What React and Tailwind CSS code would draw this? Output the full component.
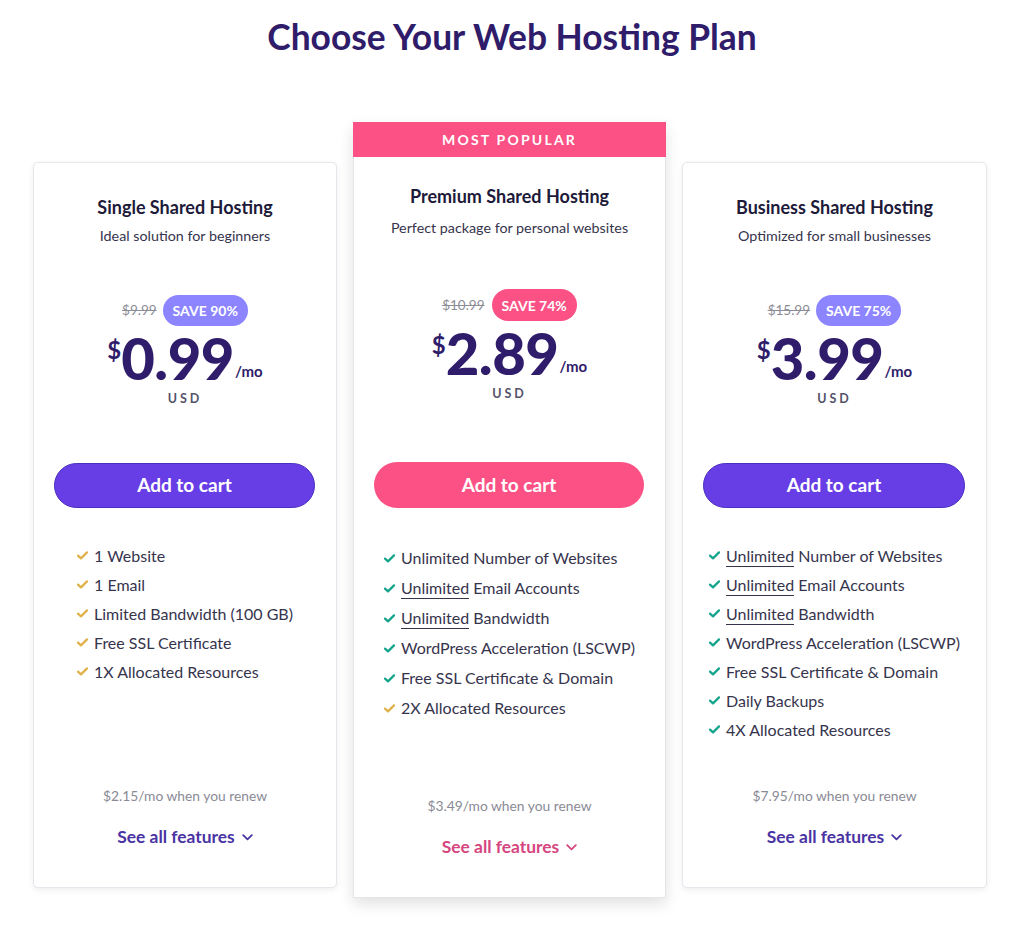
import React from "react";

const font = { fontFamily: "Lato, 'Open Sans', Arial, sans-serif" };

function Check({ gold }) {
  return (
    <svg width="11" height="9" viewBox="0 0 11 9" className="shrink-0">
      <path
        d="M1 4.6 L4 7.4 L10 1.4"
        fill="none"
        stroke={gold ? "#e0b04a" : "#14a38b"}
        strokeWidth="2.2"
        strokeLinecap="round"
        strokeLinejoin="round"
      />
    </svg>
  );
}

function Chevron({ color }) {
  return (
    <svg width="11" height="7" viewBox="0 0 11 7" className="ml-[7px] mt-[1px]">
      <path d="M1.2 1.2 L5.5 5.3 L9.8 1.2" fill="none" stroke={color} strokeWidth="1.8" strokeLinecap="round" strokeLinejoin="round" />
    </svg>
  );
}

function Feature({ f }) {
  return (
    <li className="flex items-center gap-[6px] h-[29px] text-[16px] text-[#36344d]">
      <Check gold={f.gold} />
      <span>
        {f.u ? (
          <>
            <span className="border-b border-[#36344d] pb-[1px]">Unlimited</span>
            {" " + f.t}
          </>
        ) : (
          f.t
        )}
      </span>
    </li>
  );
}

function Card({ plan }) {
  const pink = plan.popular;
  return (
    <div
      className={
        pink
          ? "w-[313px] bg-white border border-[#e4e4ea] shadow-[0_6px_14px_rgba(0,0,0,0.12)] flex flex-col h-[776px]"
          : "w-[305px] mt-[40px] bg-white border border-[#e6e6ec] rounded-[5px] shadow-[0_2px_6px_rgba(0,0,0,0.07)] flex flex-col h-[726px]"
      }
    >
      {pink && (
        <div className="h-[35px] -mx-px -mt-px bg-[#fc5185] text-white text-[14px] font-bold tracking-[2.2px] flex items-center justify-center">
          MOST POPULAR
        </div>
      )}
      <div className={pink ? "pt-[27px] flex flex-col items-center" : "pt-[32px] flex flex-col items-center"}>
        <div className="text-[18px] font-bold text-[#1d1a3a] leading-[24px]">{plan.name}</div>
        <div className={pink ? "text-[14.3px] text-[#36344d] leading-[20px] mt-[10px]" : "text-[14.3px] text-[#36344d] leading-[20px] mt-[7px]"}>
          {plan.sub}
        </div>
        <div className={pink ? "flex items-center gap-[7px] mt-[51px]" : "flex items-center gap-[6px] mt-[49px]"}>
          <span className="text-[13.5px] text-[#8d8d97] line-through">{plan.old}</span>
          <span
            className={
              pink
                ? "h-[32px] px-[10px] rounded-full bg-[#fc5185] text-white text-[14px] font-bold flex items-center"
                : "h-[31px] px-[10px] rounded-full bg-[#8c85ff] text-white text-[14px] font-bold flex items-center"
            }
          >
            {plan.save}
          </span>
        </div>
        <div className="flex items-start text-[#2f1c6a] mt-[2px]">
          <span className="text-[24px] font-bold leading-none mt-[10px]">$</span>
          <span className="text-[58px] font-black leading-[60px] tracking-[-0.5px]">{plan.price}</span>
          <span className="text-[15px] font-bold self-end mb-[6px] ml-[1px]">/mo</span>
        </div>
        <div className="text-[12.5px] font-bold text-[#55536a] tracking-[3px] mt-[3px] leading-[16px]">USD</div>
      </div>
      <div className={pink ? "px-[20px] pr-[21px] mt-[60px]" : "px-[20px] pr-[21px] mt-[56px]"}>
        <button
          className={
            pink
              ? "w-full h-[46px] rounded-full bg-[#fc5185] text-white text-[19px] font-bold"
              : "w-full h-[45px] rounded-full bg-[#673de6] text-white text-[19px] font-bold border border-[#4a2fbf]"
          }
        >
          Add to cart
        </button>
      </div>
      <div className={pink ? "flex-1 mt-[35px]" : "flex-1 mt-[33px]"}>
        <ul className={pink ? "w-fit mx-auto [&>li]:h-[30px]" : "w-fit mx-auto"}>
          {plan.features.map((f, i) => (
            <Feature key={i} f={f} />
          ))}
        </ul>
      </div>
      <div className="flex flex-col items-center pb-[38px]">
        <div className="text-[13.8px] text-[#8a8a96] leading-[20px]">{plan.renew}</div>
        <div className={pink ? "mt-[19px] h-[24px] flex items-center text-[17.4px] font-bold text-[#d5467f]" : "mt-[19px] h-[24px] flex items-center text-[17.4px] font-bold text-[#4a33a3]"}>
          See all features
          <Chevron color={pink ? "#d5467f" : "#4a33a3"} />
        </div>
      </div>
    </div>
  );
}

const plans = [
  {
    name: "Single Shared Hosting",
    sub: "Ideal solution for beginners",
    old: "$9.99",
    save: "SAVE 90%",
    price: "0.99",
    renew: "$2.15/mo when you renew",
    features: [
      { t: "1 Website", gold: true },
      { t: "1 Email", gold: true },
      { t: "Limited Bandwidth (100 GB)", gold: true },
      { t: "Free SSL Certificate", gold: true },
      { t: "1X Allocated Resources", gold: true },
    ],
  },
  {
    popular: true,
    name: "Premium Shared Hosting",
    sub: "Perfect package for personal websites",
    old: "$10.99",
    save: "SAVE 74%",
    price: "2.89",
    renew: "$3.49/mo when you renew",
    features: [
      { t: "Unlimited Number of Websites" },
      { u: true, t: "Email Accounts" },
      { u: true, t: "Bandwidth" },
      { t: "WordPress Acceleration (LSCWP)" },
      { t: "Free SSL Certificate & Domain" },
      { t: "2X Allocated Resources", gold: true },
    ],
  },
  {
    name: "Business Shared Hosting",
    sub: "Optimized for small businesses",
    old: "$15.99",
    save: "SAVE 75%",
    price: "3.99",
    renew: "$7.95/mo when you renew",
    features: [
      { u: true, t: "Number of Websites" },
      { u: true, t: "Email Accounts" },
      { u: true, t: "Bandwidth" },
      { t: "WordPress Acceleration (LSCWP)" },
      { t: "Free SSL Certificate & Domain" },
      { t: "Daily Backups" },
      { t: "4X Allocated Resources" },
    ],
  },
];

export default function App() {
  return (
    <div className="w-[1024px] h-[930px] bg-white" style={font}>
      <h1 className="text-center text-[35.4px] font-bold text-[#2f1c6a] pt-[16px] leading-[42px]">
        Choose Your Web Hosting Plan
      </h1>
      <div className="flex items-start pl-[33px] gap-[16px] mt-[64px]">
        <div className="w-[304px] flex">
          <Card plan={plans[0]} />
        </div>
        <Card plan={plans[1]} />
        <Card plan={plans[2]} />
      </div>
    </div>
  );
}
